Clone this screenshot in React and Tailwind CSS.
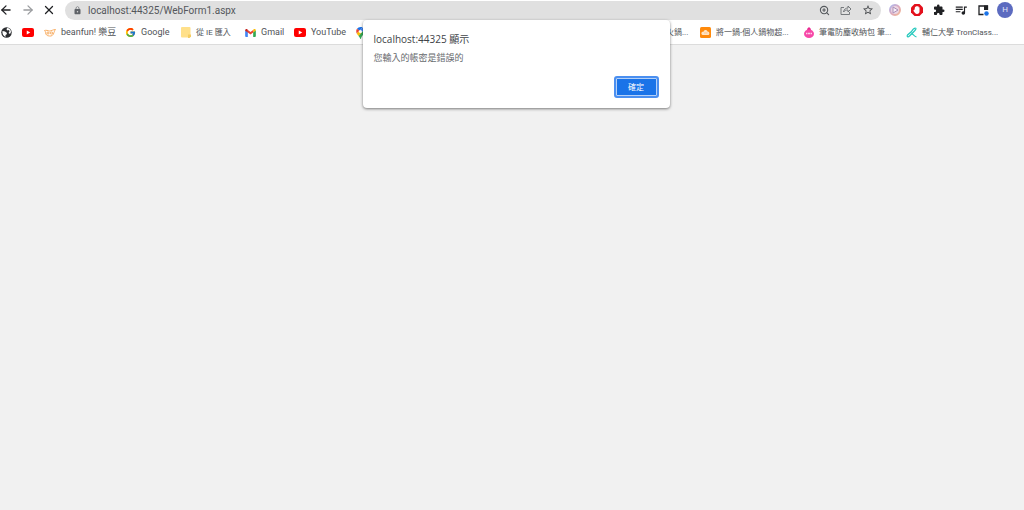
import { ArrowLeft, ArrowRight, X, ZoomIn } from "lucide-react";
import {
  MdExtension,
  MdLock,
  MdQueueMusic,
  MdStarBorder,
} from "react-icons/md";
import { FcGoogle } from "react-icons/fc";

const GlobeIcon = () => (
  <svg viewBox="0 0 22 22" className="h-[11px] w-[11px]">
    <circle cx="11" cy="11" r="10.500" fill="#2b2d30" />
    <path d="M3 8l5 1 4 3-1 3-2 1v4C5 18 2 14 3 8z" fill="#fff" />
    <path d="M12 2l-1 3 2 2 3-1 1 3-2 3 3 2 2-4c0-4-3-8-8-8z" fill="#fff" />
  </svg>
);

const YouTubeIcon = () => (
  <svg viewBox="0 0 24 18" className="h-[9px] w-3">
    <rect width="24" height="18" rx="4" fill="#f00" />
    <path d="M9.5 5v8l7-4z" fill="#fff" />
  </svg>
);

const BeanfunIcon = () => (
  <svg viewBox="0 0 24 16" className="h-2 w-3" fill="none" stroke="#f7a757" strokeWidth="1.8">
    <path d="M1 3c3-1 7 0 10 1 4 0 7-3 12-3-2 2-2 4-3 6-1 5-5 8-9 7C6 14 3 11 3 7 3 5 2 4 1 3z" />
    <ellipse cx="8" cy="8" rx="2.5" ry="2" />
    <ellipse cx="15" cy="8" rx="2.5" ry="2" />
  </svg>
);

const FolderIcon = () => (
  <svg viewBox="0 0 20 22" className="h-[11px] w-2.5">
    <rect width="19" height="21" rx="2" fill="#ffe08a" />
    <path d="M14 15h6v4l-3 3h-3z" fill="#f5cd62" />
  </svg>
);

const GmailIcon = () => (
  <svg viewBox="0 0 24 18" className="h-2 w-[11px]">
    <path d="M0 3v13a2 2 0 0 0 2 2h4V7z" fill="#4285f4" />
    <path d="M24 3v13a2 2 0 0 1-2 2h-4V7z" fill="#34a853" />
    <path d="M18 2v6l6-4.500V3c0-3-3-4-4.800-2.400z" fill="#fbbc04" />
    <path d="M6 8V2l6 4.500L18 2v6l-6 4.500z" fill="#ea4335" />
    <path d="M0 3v1l6 4V2L4.800.6C3-.8 0 .3 0 3z" fill="#c5221f" />
  </svg>
);

const MapsIcon = () => (
  <svg viewBox="0 0 18 24" className="h-3 w-[9px]">
    <path d="M9 0a9 9 0 0 0-7 3.300l5 4.200L13 1C12 .3 10.500 0 9 0z" fill="#1a73e8" />
    <path d="M2 3.300C0 6 0 9 1.500 13L7 7.500z" fill="#ea4335" />
    <path d="M13 1 7 7.500l4.500 3.800L17 5c-.8-1.700-2.200-3.300-4-4z" fill="#4285f4" />
    <path d="M1.500 13c1 2 2 3.500 3.500 5l6.500-7L7 7.500z" fill="#fbbc04" />
    <path d="M17 5c3 7-4 10-6 15-1 3-1 4-2 4s-1-3-4-6z" fill="#34a853" />
    <circle cx="9" cy="9" r="3.200" fill="#fff" />
  </svg>
);

const CloudIcon = () => (
  <svg viewBox="0 0 22 22" className="h-[11px] w-[11px]">
    <rect width="22" height="22" rx="3" fill="#ff8a0c" />
    <path d="M5 16a3.500 3.500 0 0 1-1-6c1-.8 2-.5 3-.5 1-4 6-4.500 8-.5 4-.5 5 6 2 7z" fill="#ffe3c2" />
    <path d="M8 12h7" stroke="#ffb163" strokeWidth="1.200" />
  </svg>
);

const ShopIcon = () => (
  <svg viewBox="0 0 20 22" className="h-[11px] w-2.5">
    <path d="M10 0l4 4-1 3H7L6 4z" fill="#e8288f" />
    <ellipse cx="10" cy="13.500" rx="10" ry="8.500" fill="#f748a8" />
    <path d="M4 13h3m1 0h4m1 0h3" stroke="#ffd0ea" strokeWidth="3" />
  </svg>
);

const TronIcon = () => (
  <svg viewBox="0 0 22 22" className="h-[11px] w-[11px]" fill="none" stroke="#27c9bd" strokeWidth="2.500">
    <path d="M19 2c-4 0-6 3-8 7L3 16c-2 3 1 5 4 2l5-5c3 3 5 6 9 7" />
    <path d="M19 2c2 1 0 4-3 7l-4 4" />
  </svg>
);

const ShareIcon = () => (
  <svg viewBox="0 0 24 24" className="h-3 w-3" fill="none" stroke="#6b6f73" strokeWidth="1.800">
    <path d="M8 7H2v14h17v-5" />
    <path d="M7 16c1-6 5-8 9-8V4l6 6-6 6v-4c-4 0-7 1-9 4z" />
  </svg>
);

const PlayerIcon = () => (
  <svg viewBox="0 0 24 24" className="h-3 w-3">
    <defs>
      <linearGradient id="player" x1="0" y1="0" x2="1" y2="1">
        <stop offset="0" stopColor="#aeb9ef" />
        <stop offset=".5" stopColor="#dba8bd" />
        <stop offset="1" stopColor="#f3b894" />
      </linearGradient>
    </defs>
    <circle cx="12" cy="12" r="10" fill="#ecd6e2" stroke="url(#player)" strokeWidth="4" />
    <path d="M8 6v12l10-6z" fill="#f8f0f6" stroke="#a98fb8" strokeWidth="2" strokeLinejoin="round" />
  </svg>
);

const BlockIcon = () => (
  <svg viewBox="0 0 24 24" className="h-3 w-3">
    <path d="M7 0h10l7 7v10l-7 7H7l-7-7V7z" fill="#e3101c" />
    <path
      d="M7 12l1-6c0-1 2-1 2 0V5c0-1 2-1 2 0 0-1 3-1 3 0v2c0-1 2-1 2 0v8c0 3-2 5-5 5s-5-3-7-6c0-2 1-3 2-2z"
      fill="#fff"
    />
  </svg>
);

const SidePanelIcon = () => (
  <svg viewBox="0 0 22 22" className="h-[11px] w-[11px]">
    <path d="M19 10V2H2v17h9" fill="none" stroke="#202124" strokeWidth="2.600" />
    <path d="M12 1h8v9h-8z" fill="#202124" />
    <circle cx="17" cy="17" r="4.500" fill="#1a73e8" />
  </svg>
);

const leftBookmarks = [
  { name: "Web", icon: <GlobeIcon />, width: "w-[21px]" },
  { name: "YouTube home", icon: <YouTubeIcon />, width: "w-[22px]" },
  { name: "beanfun", label: "beanfun! 樂豆", icon: <BeanfunIcon />, width: "w-[81px]", size: "text-[9px]" },
  { name: "Google", label: "Google", icon: <FcGoogle className="h-[11px] w-[11px]" />, width: "w-14", size: "text-[9px]" },
  { name: "IE", label: "從 IE 匯入", icon: <FolderIcon />, width: "w-16", size: "text-[8px]" },
  { name: "Gmail", label: "Gmail", icon: <GmailIcon />, width: "w-[49px]", size: "text-[9px]" },
  { name: "YouTube", label: "YouTube", icon: <YouTubeIcon />, width: "w-[62px]", size: "text-[9px]" },
  { name: "Maps", icon: <MapsIcon />, width: "w-3" },
];

const rightBookmarks = [
  { name: "Hot pot", label: "火鍋...", width: "w-[34px]", size: "text-[8px]" },
  { name: "Pot shop", label: "將一鍋-個人鍋物超...", icon: <CloudIcon />, width: "w-[104px]", size: "text-[8px]" },
  { name: "Laptop bag", label: "筆電防塵收納包 筆...", icon: <ShopIcon />, width: "w-[102px]", size: "text-[8px]" },
  { name: "TronClass", label: "輔仁大學 TronClass...", icon: <TronIcon />, width: "w-[118px]", size: "text-[8px]" },
];

const Bookmark = ({ name, label, icon, width, size }) => (
  <a
    href="#"
    aria-label={label || name}
    className={`flex shrink-0 items-center gap-[5px] whitespace-nowrap ${width}`}
  >
    {icon && <span className="flex shrink-0 items-center">{icon}</span>}
    {label && <span className={size}>{label}</span>}
  </a>
);

const IconButton = ({ label, children }) => (
  <button type="button" aria-label={label} className="flex h-4 w-[22px] shrink-0 items-center justify-center">
    {children}
  </button>
);

const Toolbar = () => (
  <div className="flex h-5 items-center pr-2">
    <div className="flex w-[65px] shrink-0 items-center">
      <button type="button" aria-label="Back" className="w-[21px]">
        <ArrowLeft className="-ml-px h-3.5 w-3.5 text-[#202124]" strokeWidth={2.2} />
      </button>
      <button type="button" aria-label="Forward" className="w-[21px]">
        <ArrowRight className="h-3.5 w-3.5 text-[#9a9c9f]" strokeWidth={2.2} />
      </button>
      <button type="button" aria-label="Stop">
        <X className="h-3.5 w-3.5 text-[#202124]" strokeWidth={2.2} />
      </button>
    </div>
    <div className="flex h-[19px] min-w-0 grow items-center rounded-full bg-[#e0e0e0] pr-0.5 pl-2">
      <MdLock className="h-[9px] w-[9px] shrink-0 text-[#5f6368]" />
      <input
        type="text"
        aria-label="Address"
        defaultValue="localhost:44325/WebForm1.aspx"
        className="ml-1.5 min-w-0 grow bg-transparent pt-px text-[10px] leading-4 text-[#54575b] outline-none"
      />
      <IconButton label="Zoom"><ZoomIn className="h-[11px] w-[11px] text-[#55595d]" strokeWidth={2.4} /></IconButton>
      <IconButton label="Share"><ShareIcon /></IconButton>
      <IconButton label="Bookmark this page"><MdStarBorder className="h-3 w-3 text-[#44474a]" /></IconButton>
    </div>
    <div className="flex shrink-0 items-center pl-[3px]">
      <IconButton label="Player"><PlayerIcon /></IconButton>
      <IconButton label="Blocker"><BlockIcon /></IconButton>
      <IconButton label="Extensions"><MdExtension className="h-3 w-3 text-[#202124]" /></IconButton>
      <IconButton label="Media"><MdQueueMusic className="h-3.5 w-3.5 text-[#202124]" /></IconButton>
      <IconButton label="Side panel"><SidePanelIcon /></IconButton>
      <IconButton label="Profile">
        <span className="flex h-4 w-4 items-center justify-center rounded-full bg-[#5c6bc0] text-[8px] text-[#e4e7f8]">
          H
        </span>
      </IconButton>
    </div>
  </div>
);

const AlertDialog = () => (
  <div className="absolute inset-x-0 top-5 flex justify-center pl-2">
    <div
      role="alertdialog"
      aria-labelledby="alert-title"
      aria-describedby="alert-text"
      className="w-[307px] rounded-sm bg-white px-[11px] pt-[11px] pb-2.5 font-['Open_Sans','Noto_Sans_CJK_TC',sans-serif] shadow-[0_1px_3px_rgba(0,0,0,0.5)]"
    >
      <h1 id="alert-title" className="text-[10px] leading-4 text-[#404347]">
        localhost:44325 顯示
      </h1>
      <p id="alert-text" className="mt-[3px] text-[9px] leading-4 text-[#66696d]">
        您輸入的帳密是錯誤的
      </p>
      <div className="mt-2.5 flex justify-end">
        <button
          type="button"
          className="h-[22px] w-[45px] rounded-[3px] border-2 border-[#4b8ff0] bg-[#1a73e8] text-[8px] leading-4 text-white inset-ring inset-ring-[#b5d1f8]"
        >
          確定
        </button>
      </div>
    </div>
  </div>
);

const App = () => {
  return (
    <div className="relative min-h-screen bg-[#f1f1f1] font-['Roboto','Noto_Sans_CJK_TC',sans-serif]">
      <header className="border-b border-[#dcdcdc] bg-white">
        <Toolbar />
        <nav className="flex h-6 items-center justify-between overflow-hidden pt-px pl-px text-[#505357]">
          <div className="flex">
            {leftBookmarks.map((item) => (
              <Bookmark key={item.name} {...item} />
            ))}
          </div>
          <div className="flex">
            {rightBookmarks.map((item) => (
              <Bookmark key={item.name} {...item} />
            ))}
          </div>
        </nav>
      </header>
      <main />
      <AlertDialog />
    </div>
  );
};

export default App;
